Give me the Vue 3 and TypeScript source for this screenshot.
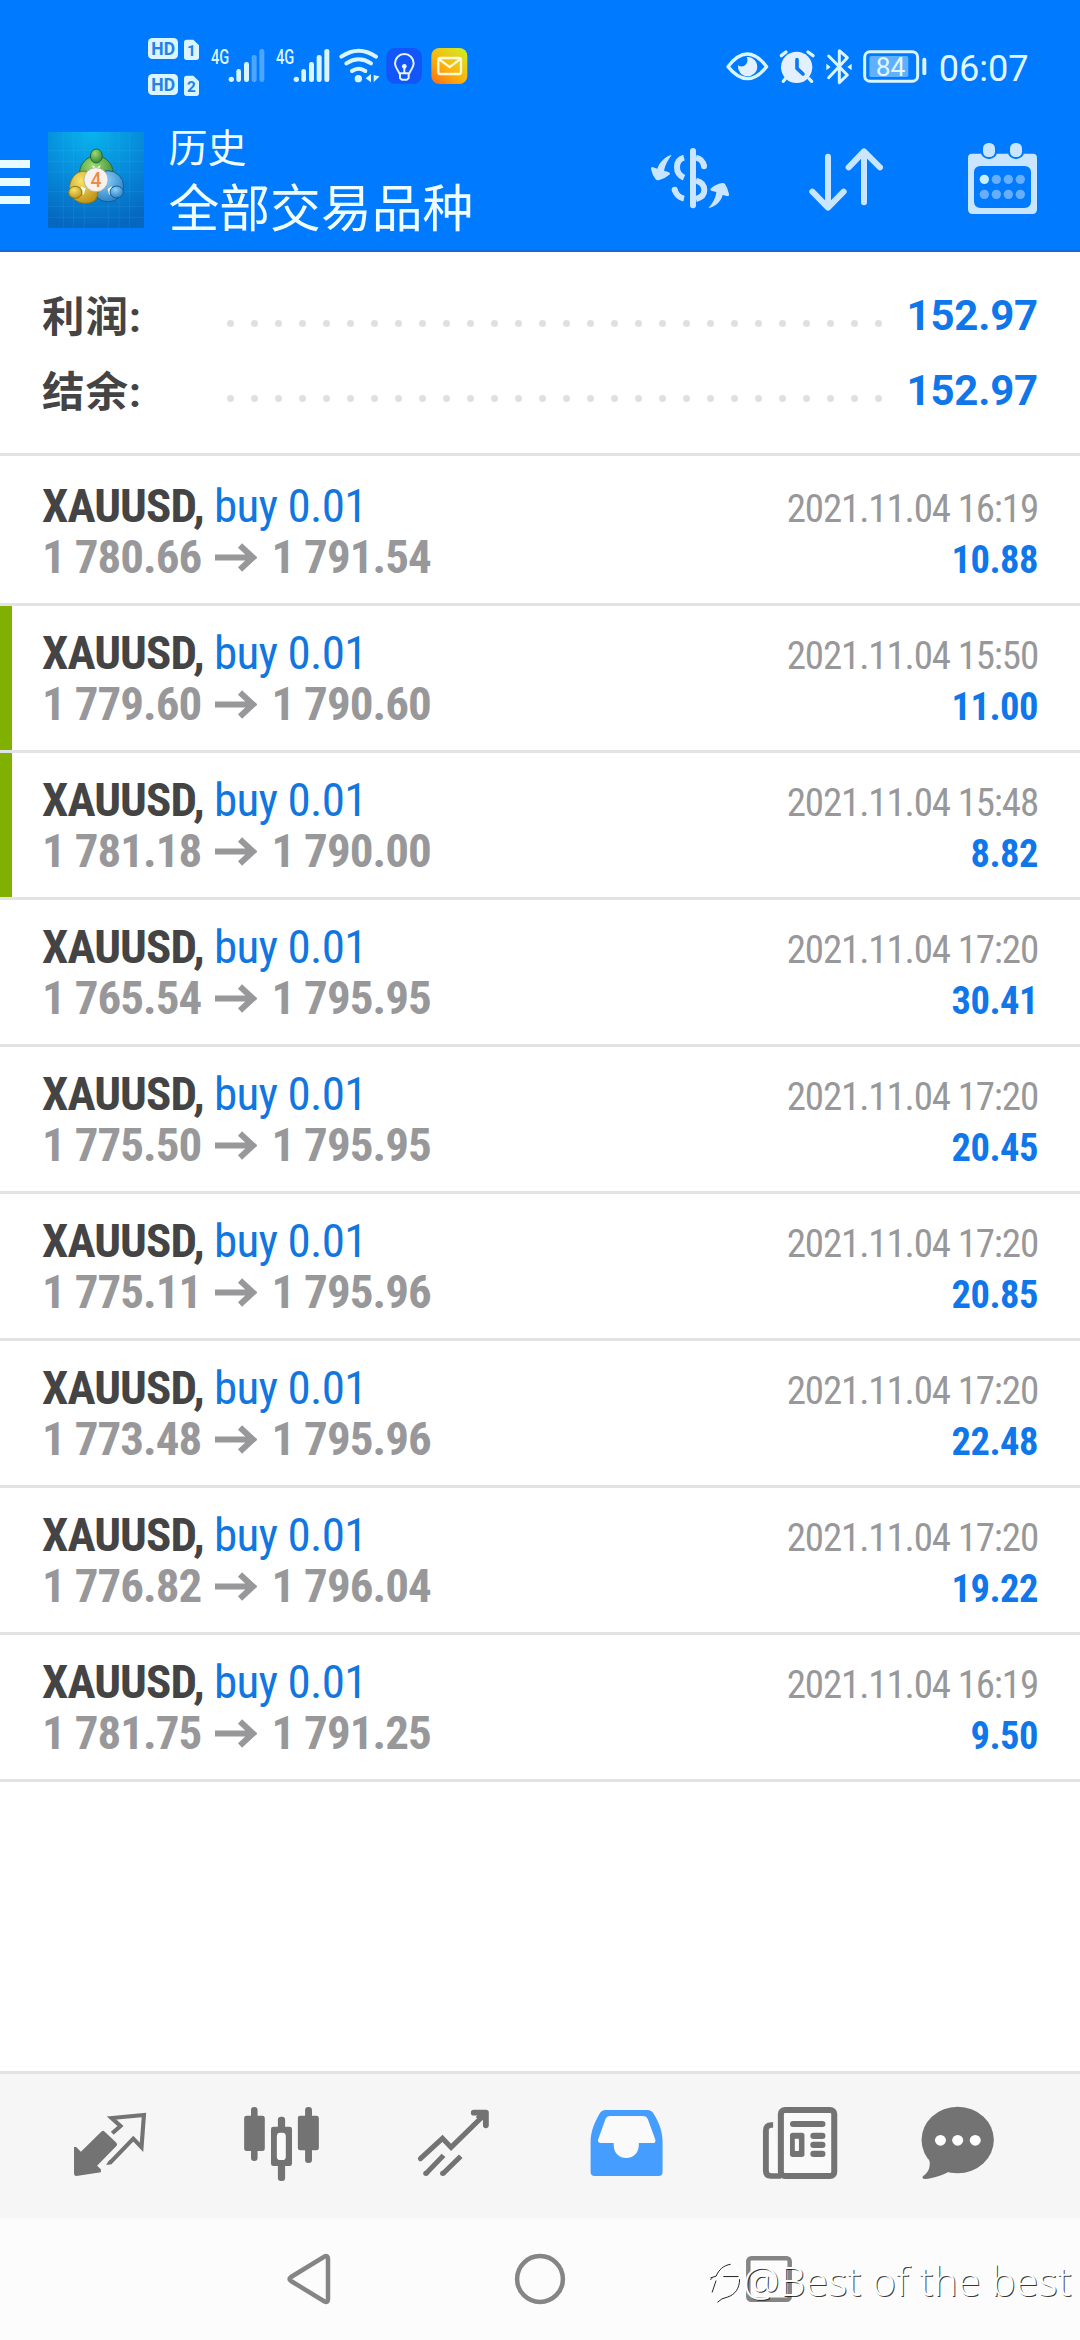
<script setup lang="ts">
interface Trade {
  open: string
  close: string
  time: string
  profit: string
  flagged?: boolean
}

const summary = [
  { label: '利润:', value: '152.97' },
  { label: '结余:', value: '152.97' },
]

const trades: Trade[] = [
  { open: '1 780.66', close: '1 791.54', time: '2021.11.04 16:19', profit: '10.88' },
  { open: '1 779.60', close: '1 790.60', time: '2021.11.04 15:50', profit: '11.00', flagged: true },
  { open: '1 781.18', close: '1 790.00', time: '2021.11.04 15:48', profit: '8.82', flagged: true },
  { open: '1 765.54', close: '1 795.95', time: '2021.11.04 17:20', profit: '30.41' },
  { open: '1 775.50', close: '1 795.95', time: '2021.11.04 17:20', profit: '20.45' },
  { open: '1 775.11', close: '1 795.96', time: '2021.11.04 17:20', profit: '20.85' },
  { open: '1 773.48', close: '1 795.96', time: '2021.11.04 17:20', profit: '22.48' },
  { open: '1 776.82', close: '1 796.04', time: '2021.11.04 17:20', profit: '19.22' },
  { open: '1 781.75', close: '1 791.25', time: '2021.11.04 16:19', profit: '9.50' },
]

const calendarDots = [0, 1, 2, 3, 4, 5, 6, 7].map((i) => ({
  x: 1093 + (i % 4) * 36,
  y: i < 4 ? 178 : 223,
  lit: i === 0,
}))
</script>

<template>
  <div class="screen">
    <div class="status">
      <!-- HD badges -->
      <svg class="s-hd" viewBox="0 0 225 270">
        <g v-for="(n, i) in ['1', '2']" :key="n" :transform="`translate(0 ${i * 108})`">
          <rect x="54" y="54" width="90" height="63" rx="13" class="ice" />
          <text x="64" y="106" class="badge" font-size="57" textLength="71" lengthAdjust="spacingAndGlyphs">HD</text>
          <path d="M170 59h20l17 17v36q0 8-8 8h-29q-8 0-8-8V67q0-8 8-8z" class="ice" />
          <text x="184" y="107" class="badge" font-size="46" text-anchor="middle">{{ n }}</text>
        </g>
      </svg>
      <!-- signal -->
      <svg v-for="s in [0, 1]" :key="s" class="s-signal" viewBox="225 0 195 270">
        <text x="243" y="131" class="net" font-size="58" textLength="55" lengthAdjust="spacingAndGlyphs">4G</text>
        <circle cx="304" cy="178" r="8" class="ice" />
        <rect x="319" y="147" width="14" height="39" rx="7" class="ice" />
        <rect x="342" y="126" width="15" height="60" rx="7" class="ice" />
        <rect x="365" y="105" width="15" height="81" rx="7" class="ice" :opacity="s ? 1 : 0.35" />
        <rect x="388" y="87" width="15" height="99" rx="7" class="ice" :opacity="s ? 1 : 0.35" />
      </svg>
      <!-- wifi -->
      <svg class="s-wifi" viewBox="615 0 145 270">
        <g fill="none" stroke="#d9f5ff" stroke-width="12" stroke-linecap="round">
          <path d="M634 110Q686 74 738 110" />
          <path d="M649 130Q686 106 723 130" />
          <path d="M666 153Q686 139 706 153" />
        </g>
        <circle cx="685" cy="176" r="11" class="ice" />
        <path d="M723 162v25l-16-12zM731 165v22l18-18-9-2z" class="ice" />
      </svg>
      <!-- bulb -->
      <svg class="s-bulb" viewBox="760 0 130 270">
        <rect x="770" y="84" width="107" height="107" rx="26" fill="#1256fa" />
        <g fill="none" stroke="#e6f5ff" stroke-width="6" stroke-linejoin="round" stroke-linecap="round">
          <path d="M809 160C805 148 796 144 796 130a28 28 0 0 1 56 0C852 144 843 148 839 160zM811 160v14l5 5h16l5-5v-14M824 140v20" />
        </g>
        <circle cx="824" cy="139" r="7" fill="#e6f5ff" />
      </svg>
      <!-- mail -->
      <svg class="s-mail" viewBox="890 0 190 270">
        <defs>
          <linearGradient id="mailFill" x1="0" y1="1" x2="0.75" y2="0">
            <stop offset="0" stop-color="#ff6a10" />
            <stop offset="0.5" stop-color="#fbb40c" />
            <stop offset="1" stop-color="#d5e622" />
          </linearGradient>
        </defs>
        <rect x="903" y="84" width="108" height="108" rx="24" fill="url(#mailFill)" />
        <path d="M930 114h56q6 0 6 6v36q0 6-6 6h-56q-6 0-6-6v-36q0-6 6-6zM928 119l30 22 30-22" fill="none" stroke="#fff8d8" stroke-width="7" stroke-linejoin="round" />
      </svg>
      <div class="grow"></div>
      <!-- eye -->
      <svg class="s-eye" viewBox="0 0 220 270">
        <path d="M84 140Q142 64 200 140Q142 212 84 140z" fill="none" stroke="#d9f5ff" stroke-width="10" stroke-linejoin="round" />
        <path d="M140 111a29 29 0 1 1-26 25q14 9 24-3 8-10 2-22z" class="pale" />
      </svg>
      <!-- alarm -->
      <svg class="s-alarm" viewBox="220 0 140 270">
        <circle cx="291" cy="142" r="47" class="pale" />
        <path d="M245 107l14-11M325 96l15 11M257 176l-6 8M328 176l8 8" stroke="#d9f5ff" stroke-width="10" stroke-linecap="round" />
        <path d="M292 119v26l18 17" fill="none" stroke="#0b78f4" stroke-width="11" stroke-linecap="round" stroke-linejoin="round" />
      </svg>
      <!-- bluetooth -->
      <svg class="s-bt" viewBox="360 0 110 270">
        <path d="M386 108l56 57-24 23V92l24 21-56 60" fill="none" stroke="#d9f5ff" stroke-width="9" stroke-linejoin="round" stroke-linecap="round" />
        <path d="M379 131l13 10-13 10zM455 131l-13 10 13 10z" class="ice" />
      </svg>
      <!-- battery -->
      <svg class="s-batt" viewBox="470 0 230 270">
        <rect x="507" y="108" width="117" height="63" rx="5" fill="#5fb0ff" />
        <rect x="493" y="95" width="159" height="89" rx="16" fill="none" stroke="#d9f5ff" stroke-width="9" />
        <rect x="666" y="113" width="12" height="53" rx="6" class="ice" />
        <text x="526" y="169" class="figure" font-size="80" textLength="89" lengthAdjust="spacingAndGlyphs">84</text>
      </svg>
      <svg class="s-time" viewBox="700 0 440 270">
        <text x="717" y="184" class="figure" font-size="113" textLength="270" lengthAdjust="spacingAndGlyphs">06:07</text>
      </svg>
    </div>

    <header class="appbar">
      <div class="menu"><i></i><i></i><i></i></div>
      <svg class="logo" viewBox="144 66 288 288">
        <defs>
          <radialGradient id="lgBg" cx="0.45" cy="0" r="1">
            <stop offset="0" stop-color="#08b4ee" />
            <stop offset="0.5" stop-color="#078ddb" />
            <stop offset="1" stop-color="#0567c0" />
          </radialGradient>
          <radialGradient id="lgG" cx="0.4" cy="0.3" r="0.8"><stop offset="0" stop-color="#9edb72" /><stop offset="1" stop-color="#2b7d2c" /></radialGradient>
          <radialGradient id="lgY" cx="0.4" cy="0.3" r="0.8"><stop offset="0" stop-color="#f8e368" /><stop offset="1" stop-color="#b98c10" /></radialGradient>
          <radialGradient id="lgB" cx="0.4" cy="0.3" r="0.8"><stop offset="0" stop-color="#8ed2fa" /><stop offset="1" stop-color="#1e76c0" /></radialGradient>
        </defs>
        <rect x="144" y="66" width="288" height="288" fill="url(#lgBg)" />
        <path d="M190 66v288M221 66v288M253 66v288M325 66v288M357 66v288M389 66v288M144 122h288M144 154h288M144 186h288M144 245h288M144 290h288M144 322h288" stroke="#59c0ef" stroke-opacity="0.2" stroke-width="2" />
        <g stroke-width="3">
          <circle cx="289" cy="188" r="50" fill="url(#lgG)" stroke="#236a38" />
          <circle cx="324" cy="229" r="47" fill="url(#lgB)" stroke="#155a93" />
          <path d="M209 250C204 205 230 180 258 184L292 236C298 262 285 280 258 280C238 280 224 274 209 250z" fill="url(#lgY)" stroke="#8a7420" />
          <path d="M276 165l13 8 13-8-5 14h-16zM243 229l14 6-6 20-8-8zM335 229l-12 8 4 17 10-8z" fill="#effbe9" stroke="none" />
          <ellipse cx="289" cy="138" rx="18" ry="21" fill="url(#lgG)" stroke="#236a38" />
          <ellipse cx="226" cy="247" rx="20" ry="18" fill="url(#lgY)" stroke="#8a7420" />
          <ellipse cx="350" cy="246" rx="20" ry="18" fill="url(#lgB)" stroke="#155a93" />
        </g>
        <circle cx="288" cy="209" r="36" fill="#f7f2ee" stroke="#a89f94" stroke-width="2" />
        <text x="288" y="231" font-size="58" text-anchor="middle" class="four">4</text>
      </svg>
      <div class="titles">
        <div class="t1">历史</div>
        <div class="t2">全部交易品种</div>
      </div>
      <div class="grow"></div>
      <!-- currency -->
      <svg class="act a1" viewBox="0 -30 450 426">
        <g fill="none" stroke="#c9e5ff" stroke-width="18">
          <path d="M219 93v163" stroke-linecap="round" />
          <path d="M192 113C176 117 171 130 171 142C171 158 180 168 192 173" />
          <path d="M228 113C242 116 250 126 252 139" />
          <path d="M228 182C244 186 253 197 253 211C253 226 243 233 228 237" />
          <path d="M164 209C167 222 178 233 192 236" />
        </g>
        <g fill="#c9e5ff">
          <circle cx="252" cy="139" r="9" />
          <circle cx="164" cy="209" r="9" />
          <path d="M155 105C138 108 118 126 112 146L97 141Q92 141 93 147Q97 166 107 178Q110 182 118 180Q134 177 150 163Q151 158 145 156L132 152C135 135 145 118 155 105z" />
          <path d="M265 264C285 262 303 245 308 225L324 229Q328 228 327 222Q323 203 315 192Q312 188 303 190Q286 193 271 207Q270 212 276 213L289 216C287 235 278 250 265 264z" />
        </g>
      </svg>
      <!-- sort -->
      <svg class="act a2" viewBox="450 -30 450 426">
        <path d="M624 110v150M577 215l47 48 47-48M732 247V95M686 142l46-48 48 48" fill="none" stroke="#c9e5ff" stroke-width="18" stroke-linecap="round" stroke-linejoin="round" />
      </svg>
      <!-- calendar -->
      <svg class="act a3" viewBox="900 -30 480 426">
        <path fill-rule="evenodd" d="M1056 101h183q12 0 12 12v155q0 14-14 14h-179q-14 0-14-14V113q0-12 12-12zM1082 138q-20 0-20 20v86q0 20 20 20h131q20 0 20-20v-86q0-20-20-20z" fill="#c9e5ff" />
        <g stroke="#007aff" stroke-width="12" fill="#c9e5ff" paint-order="stroke">
          <rect x="1089" y="69" width="36" height="42" rx="16" />
          <rect x="1170" y="69" width="36" height="42" rx="16" />
        </g>
        <circle v-for="d in calendarDots" :key="`${d.x}-${d.y}`" :cx="d.x" :cy="d.y" r="14" :fill="d.lit ? '#c9efff' : '#66afff'" />
      </svg>
    </header>

    <section class="summary">
      <div v-for="s in summary" :key="s.label" class="sum-row">
        <span class="sum-label">{{ s.label }}</span>
        <span class="dots"><i v-for="n in 28" :key="n"></i></span>
        <span class="sum-value">{{ s.value }}</span>
      </div>
    </section>

    <main class="list">
      <article v-for="(t, i) in trades" :key="i" class="trade" :class="{ flagged: t.flagged }">
        <div class="line">
          <span class="deal"><b>XAUUSD,</b> <span class="side">buy 0.01</span></span>
          <span class="time">{{ t.time }}</span>
        </div>
        <div class="line">
          <span class="prices"><span>{{ t.open }}</span><svg class="arrow" viewBox="0 0 42 30"><path d="M0 14.5h38M25 2.500l13 12-13 12" fill="none" stroke="#98989a" stroke-width="6" /></svg><span>{{ t.close }}</span></span>
          <span class="profit">{{ t.profit }}</span>
        </div>
      </article>
    </main>

    <nav class="tabs">
      <svg class="n1" viewBox="0 42 569.2 432" preserveAspectRatio="none">
        <path d="M294 215Q299 210 304 215L338 248Q342 253 338 258L282 317L293 328V337L222 348Q215 348 215 341V261H221L235 275z" class="ink" />
        <path d="M326 220L350 198L324 174L418 165L411 262L387 236L318 310" class="pen" stroke-width="12" />
        <path d="M308 314h10l8-8-8-6z" class="ink" />
      </svg>
      <svg class="n2" viewBox="569.2 42 499.5 432" preserveAspectRatio="none">
        <g class="ink">
          <rect x="709" y="167" width="60" height="106" rx="7" /><rect x="729" y="141" width="19" height="162" rx="9" />
          <rect x="865" y="167" width="61" height="104" rx="7" /><rect x="886" y="141" width="20" height="168" rx="9" />
          <rect x="787" y="200" width="61" height="118" rx="7" /><rect x="807" y="170" width="21" height="193" rx="9" />
        </g>
        <rect x="804" y="218" width="26" height="82" rx="10" fill="#fafafa" />
      </svg>
      <svg class="n3" viewBox="1068.7 42 499.5 432" preserveAspectRatio="none">
        <path d="M1221 296L1285 235L1310 262L1408 163" class="pen" stroke-width="15" stroke-linecap="round" />
        <path d="M1376 158H1411V196" class="pen" stroke-width="17" stroke-linecap="round" stroke-linejoin="round" />
        <path d="M1390 160h24v24l-8-4-14 0-10-8z" class="ink" />
        <path d="M1237 341L1288 286M1286 341L1338 289" class="pen" stroke-width="15" />
        <circle cx="1237" cy="340" r="8" class="ink" /><circle cx="1286" cy="340" r="8" class="ink" />
      </svg>
      <svg class="n4" viewBox="0 42 502.4 432" preserveAspectRatio="none">
        <path fill="#449dff" d="M190 150H312Q323 150 330 161C346 187 356 215 356 245V336Q356 348 344 348H159Q147 348 147 336V245C147 215 158 187 173 161Q179 150 190 150z" />
        <path d="M204 168H298Q309 168 313 177L335 239Q337 249 328 249H287V255C287 307 214 307 214 255V249H175Q166 248 169 238L190 178Q194 168 204 168z" fill="#fafafa" />
      </svg>
      <svg class="n5" viewBox="502.4 42 502.4 432" preserveAspectRatio="none">
        <path d="M677 195H672Q656 195 656 212V333Q656 348 671 348H700" class="pen back" stroke-width="17" />
        <rect x="699.5" y="150" width="155" height="198" rx="12" fill="#fafafa" stroke="#737373" stroke-width="17.5" />
        <g class="ink">
          <rect x="726" y="183" width="103" height="18" rx="9" />
          <rect x="726" y="218" width="42" height="73" rx="8" />
          <rect x="785" y="218" width="44" height="19" rx="9" />
          <rect x="785" y="245" width="44" height="19" rx="9" />
          <rect x="785" y="272" width="44" height="19" rx="9" />
        </g>
        <rect x="740" y="236" width="12" height="37" rx="2" fill="#fafafa" />
      </svg>
      <svg class="n6" viewBox="1004.8 42 563.4 432" preserveAspectRatio="none">
        <ellipse cx="1213" cy="240" rx="105" ry="99.5" class="ink" />
        <path d="M1128 292C1138 318 1128 338 1112 349Q1108 357 1118 357C1145 355 1168 346 1192 333z" class="ink" />
        <circle cx="1163" cy="241" r="16" fill="#fff" /><circle cx="1213" cy="241" r="16" fill="#fff" /><circle cx="1264" cy="241" r="16" fill="#fff" />
      </svg>
    </nav>

    <footer class="sysbar">
      <svg class="back-key" viewBox="0 0 44 52"><path d="M4 24Q1 26 4 28L37.500 48.500Q41 50 41 46V6Q41 2 37.500 3.500z" /></svg>
      <svg class="home-key" viewBox="0 0 52 52"><circle cx="26" cy="26" r="22.900" /></svg>
      <svg class="recent-key" viewBox="0 0 46 46"><rect x="2.300" y="2.300" width="41.400" height="41.400" rx="3" /></svg>
      <div class="mark">
        <svg class="mark-logo" viewBox="0 0 100 130">
          <path d="M5 48h16C30 22 45 10 68 8C95 15 98 75 70 100C55 112 40 108 26 122M10 92L24 48" fill="none" stroke="#fff" stroke-width="7" />
          <path d="M3 48L20 43C28 24 42 10 64 7M3 54l5-5M8 92l12-36M42 44h46M91 52C91 80 78 98 55 106Q36 109 24 122" fill="none" stroke="#222" stroke-width="3" />
        </svg>
        <span>@Best of the best</span>
      </div>
    </footer>
  </div>
</template>

<style>
body {
  background: #fff;
}
</style>

<style scoped>
.screen {
  width: 1080px;
  height: 2340px;
  display: flex;
  flex-direction: column;
  background: #fff;
  font-family: Roboto, "Noto Sans CJK SC", sans-serif;
  overflow: hidden;
}
svg {
  display: block;
  flex: none;
}
.grow {
  flex: 1;
}
.status {
  height: 90px;
  padding: 20px 0 0 130px;
  display: flex;
  background: #007aff;
}
.status svg {
  height: 90px;
}
.s-hd { width: 75px; }
.s-signal { width: 65px; }
.s-wifi { width: 48.33px; }
.s-bulb { width: 43.33px; }
.s-mail { width: 63.33px; }
.s-eye { width: 73.33px; }
.s-alarm { width: 46.67px; }
.s-bt { width: 36.67px; }
.s-batt { width: 76.67px; }
.s-time { width: 146.66px; }
.ice { fill: #d9f5ff; }
.pale { fill: #e3f0ff; }
.badge {
  fill: #2382e8;
  font-weight: 700;
  font-family: Roboto, sans-serif;
}
.net {
  fill: #d9f5ff;
  font-weight: 500;
  font-family: Roboto, sans-serif;
}
.figure {
  fill: #e0f7ff;
  font-family: Roboto, sans-serif;
}
.four {
  fill: #f08a4b;
  font-family: Roboto, sans-serif;
  font-weight: 500;
}
.appbar {
  height: 142px;
  box-sizing: border-box;
  display: flex;
  background: #007aff;
  border-bottom: 2px solid #116bd3;
}
.menu {
  width: 30px;
  padding-top: 50px;
  display: flex;
  flex-direction: column;
  gap: 10px;
}
.menu i {
  height: 8px;
  background: #e8fbff;
}
.logo {
  width: 96px;
  height: 96px;
  margin: 22px 0 0 18px;
}
.titles {
  margin-left: 24.5px;
  color: #effdff;
  white-space: nowrap;
}
.t1 {
  margin-top: 15px;
  font-size: 39px;
  line-height: 48px;
}
.t2 {
  margin-top: 6px;
  font-size: 50.8px;
  line-height: 62px;
}
.act {
  height: 142px;
}
.a1, .a2 { width: 150px; }
.a3 { width: 160px; }

.summary {
  height: 204px;
  box-sizing: border-box;
  padding: 28px 42px 0 42px;
  border-bottom: 3px solid #e3e3e3;
}
.sum-row {
  height: 75px;
  display: flex;
  align-items: center;
}
.sum-label {
  width: 184.5px;
  margin-top: -9px;
  font-size: 42.5px;
  font-weight: 700;
  letter-spacing: 1px;
  color: #444;
}
.dots {
  display: flex;
  gap: 17px;
  margin-top: 12px;
}
.dots i {
  width: 7px;
  height: 7px;
  border-radius: 50%;
  background: #e0e0e0;
}
.sum-value {
  margin: -5px 0 0 auto;
  font-size: 42px;
  font-weight: 700;
  letter-spacing: -0.2px;
  color: #0f77ea;
}
.list {
  flex: 1;
}
.trade {
  height: 147px;
  box-sizing: border-box;
  padding: 21px 42px 0 42px;
  border-bottom: 3px solid #e3e3e3;
}
.trade:first-child {
  height: 150px;
  padding-top: 24px;
}
.trade.flagged {
  box-shadow: inset 12px 0 #80b000;
}
.line {
  height: 51px;
  line-height: 51px;
  display: flex;
  align-items: baseline;
  justify-content: space-between;
  white-space: nowrap;
  font-stretch: 75%;
  font-size: 47px;
}
.deal {
  letter-spacing: -0.7px;
}
.deal b {
  color: #444;
  letter-spacing: -0.9px;
}
.side {
  color: #1177e0;
}
.prices {
  display: flex;
  align-items: baseline;
  font-weight: 700;
  letter-spacing: -0.95px;
  color: #98989a;
}
.arrow {
  width: 42px;
  height: 30px;
  margin: 0 14px;
}
.time {
  font-size: 39px;
  letter-spacing: -1.15px;
  color: #98989a;
}
.profit {
  font-size: 38.5px;
  font-weight: 700;
  letter-spacing: -0.5px;
  color: #0f77ea;
}
.tabs {
  height: 147px;
  box-sizing: border-box;
  border-top: 3px solid #e3e3e3;
  display: flex;
  background: #f6f6f6;
}
.tabs svg {
  height: 144px;
}
.n1 { width: 196px; }
.n2, .n3 { width: 172px; }
.n4, .n5 { width: 173px; }
.n6 { width: 194px; }
.ink { fill: #737373; }
.pen {
  fill: none;
  stroke: #737373;
}
.pen.back { fill: #fafafa; }
.sysbar {
  position: relative;
  height: 122px;
  display: flex;
  align-items: center;
  background: #fcfcfc;
}
.sysbar > svg {
  fill: none;
  stroke: #858585;
  stroke-width: 4.5;
}
.back-key {
  width: 44px;
  height: 52px;
  margin-left: 287px;
}
.home-key {
  width: 52px;
  height: 52px;
  margin-left: 183px;
}
.recent-key {
  width: 46px;
  height: 46px;
  margin-left: 180px;
}
.mark {
  position: absolute;
  left: 709px;
  top: 38px;
  display: flex;
  white-space: nowrap;
}
.mark-logo {
  width: 34px;
  height: 43px;
  margin-top: 6px;
}
.mark span {
  font-family: "Noto Sans", sans-serif;
  font-size: 41px;
  font-weight: 300;
  line-height: 48px;
  color: #fff;
  text-shadow: 1px 1px 0 rgba(20, 20, 20, 0.85);
}
</style>
